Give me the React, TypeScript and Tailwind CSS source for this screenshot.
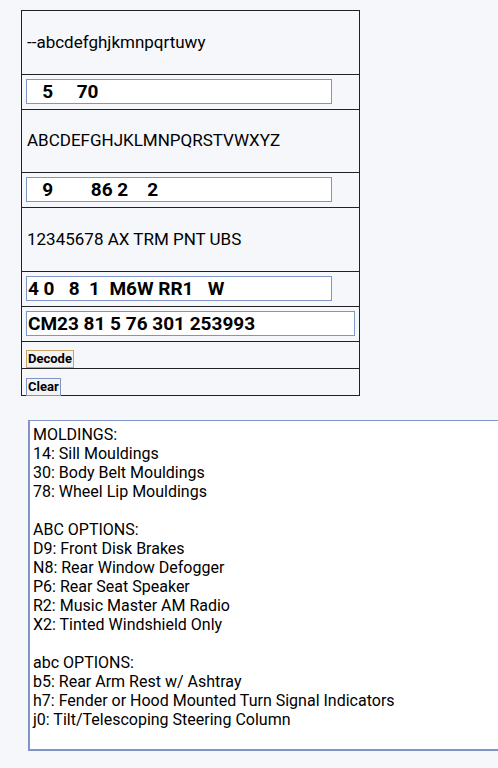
import React from "react";

const inputCls =
  "block h-[25px] bg-white border border-[#8194c6] px-[1px] text-[19px] font-bold text-black leading-none outline-none font-['Roboto',sans-serif] whitespace-pre";

export default function App() {
  const lines = [
    "MOLDINGS:",
    "14: Sill Mouldings",
    "30: Body Belt Mouldings",
    "78: Wheel Lip Mouldings",
    "",
    "ABC OPTIONS:",
    "D9: Front Disk Brakes",
    "N8: Rear Window Defogger",
    "P6: Rear Seat Speaker",
    "R2: Music Master AM Radio",
    "X2: Tinted Windshield Only",
    "",
    "abc OPTIONS:",
    "b5: Rear Arm Rest w/ Ashtray",
    "h7: Fender or Hood Mounted Turn Signal Indicators",
    "j0: Tilt/Telescoping Steering Column",
  ];
  return (
    <div className="min-h-[768px] w-[498px] overflow-hidden bg-[#f5f7fb] font-['Roboto',sans-serif] text-black">
      <div className="pt-[10px] pl-[21px]">
        <div className="w-[339px] border border-[#222]">
          <div className="h-[63px] flex items-center pl-[5px] text-[17px]">--abcdefghjkmnpqrtuwy</div>
          <div className="h-[35px] border-t border-[#222] pl-[4px] pt-[4px]">
            <input readOnly className={inputCls + " w-[306px]"} value="   5     70" />
          </div>
          <div className="h-[63px] border-t border-[#222] flex items-center pl-[5px] text-[17px]">ABCDEFGHJKLMNPQRSTVWXYZ</div>
          <div className="h-[35px] border-t border-[#222] pl-[4px] pt-[4px]">
            <input readOnly className={inputCls + " w-[306px]"} value="   9        86 2    2" />
          </div>
          <div className="h-[64px] border-t border-[#222] flex items-center pl-[5px] text-[17px]">12345678 AX TRM PNT UBS</div>
          <div className="h-[35px] border-t border-[#222] pl-[4px] pt-[4px]">
            <input readOnly className={inputCls + " w-[306px]"} value="4 0   8  1  M6W RR1   W" />
          </div>
          <div className="h-[35px] border-t border-[#222] pl-[4px] pt-[4px]">
            <input readOnly className={inputCls + " w-[329px]"} value="CM23 81 5 76 301 253993" />
          </div>
          <div className="h-[27px] border-t border-[#222] pl-[4px] pt-[4px]">
            <button className="h-[18px] px-[1px] border border-[#c9a36a] bg-[#f3f3f3] text-[13px] font-bold leading-none">Decode</button>
          </div>
          <div className="h-[27px] border-t border-[#222] pl-[4px] pt-[5px]">
            <button className="h-[18px] px-[1px] border border-[#8194c6] bg-[#f3f3f3] text-[13px] font-bold leading-none">Clear</button>
          </div>
        </div>
      </div>
      <div className="pl-[28px] pt-[24px]">
        <div className="w-[500px] h-[331px] bg-white border border-[#8194c6] border-l-2 border-b-2 pl-[3px] pt-[4px] text-[16px] leading-[19px] whitespace-pre">
          {lines.map((l, i) => (
            <div key={i} className="h-[19px]">{l}</div>
          ))}
        </div>
      </div>
    </div>
  );
}
